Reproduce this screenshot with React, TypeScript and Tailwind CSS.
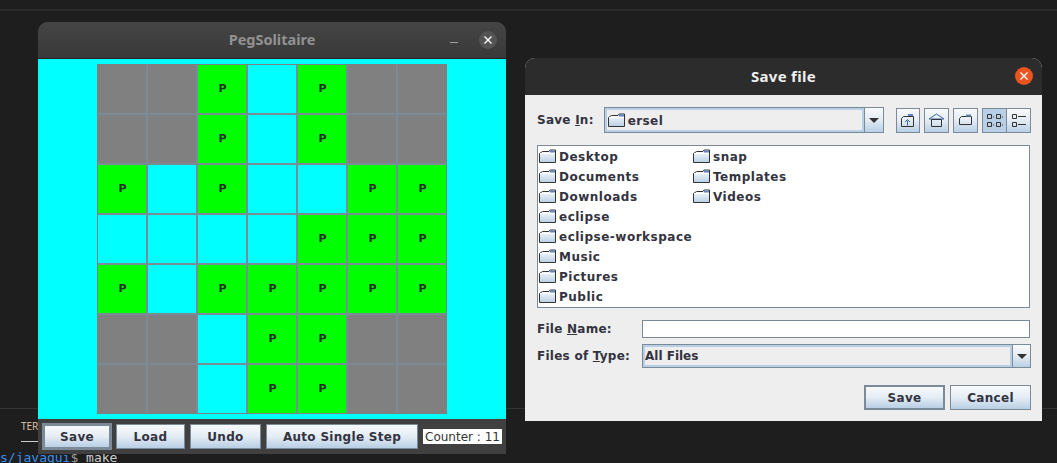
import React from 'react';

const metal = '[font-family:"DejaVu_Sans",sans-serif] font-bold text-[12px] text-[#333340]';
const btnFace = 'bg-gradient-to-b from-[#f8fafc] via-[#e4ecf4] to-[#b8cfe5]';

const board = [
  'xxP.Pxx',
  'xxP.Pxx',
  'P.P..PP',
  '....PPP',
  'P.PPPPP',
  'xx.PPxx',
  'xx.PPxx',
];

function Cell({ kind }: { kind: string }) {
  if (kind === 'x') return <div className="bg-[#808080]" />;
  if (kind === '.') return <div className="bg-[#00ffff]" />;
  return (
    <div className="flex items-center justify-center pl-px pt-px bg-[#00ff00] [font-family:'DejaVu_Sans',sans-serif] font-bold text-[11px] text-[#1f2f1f]">
      P
    </div>
  );
}

function Folder() {
  return (
    <svg width="17" height="14" viewBox="0 0 17 14" className="shrink-0 -mt-[2px]">
      <defs>
        <linearGradient id="fold" x1="0" y1="0" x2="0" y2="1">
          <stop offset="0" stopColor="#ffffff" />
          <stop offset="1" stopColor="#b8cfe5" />
        </linearGradient>
      </defs>
      <path d="M.5 4.5 L3.5 2.5 H10 L11 1 H16.5 V13.5 H.5 Z" fill="url(#fold)" stroke="#333" strokeWidth="1" />
      <path d="M11 1.5h5v2h-5z" fill="#6382bf" />
      <path d="M1 4.5H16" stroke="#fff" />
    </svg>
  );
}

function MetalBtn({ children, className = '' }: { children: React.ReactNode; className?: string }) {
  return (
    <div className={`flex items-center justify-center border border-[#7a8a99] ${btnFace} ${metal} tracking-[0.3px] ${className}`}>
      {children}
    </div>
  );
}

function ComboArrow({ className = '' }: { className?: string }) {
  return (
    <div className={`flex items-center justify-center border-l border-[#7a8a99] ${btnFace} ${className}`}>
      <svg width="10" height="5" viewBox="0 0 10 5">
        <path d="M0 0h10L5 5z" fill="#333" />
      </svg>
    </div>
  );
}

function ToolBtn({ children, active = false, className = '' }: { children: React.ReactNode; active?: boolean; className?: string }) {
  return (
    <div className={`flex items-center justify-center w-[25px] h-[25px] border border-[#7a8a99] ${active ? 'bg-[#b8cfe5]' : btnFace} ${className}`}>
      <svg width="19" height="17" viewBox="0 0 19 17" fill="none" stroke="#333">
        {children}
      </svg>
    </div>
  );
}

const FolderRow = ({ name }: { name: string }) => (
  <div className={`flex items-center gap-[3px] h-[20px] whitespace-nowrap ${metal} tracking-[0.5px]`}>
    <Folder />
    <span>{name}</span>
  </div>
);

export default function App() {
  return (
    <div className="relative flex flex-col w-[1057px] h-[463px] overflow-hidden bg-[#1e1e1e]">
      <div className="h-[11px] border-b-2 border-[#2a2a2a]" />

      <div className="mt-auto h-[55px] border-t border-[#333333] pl-[21px] pt-[10px]">
        <div className="w-[40px] h-[23px] border-b border-[#cccccc] text-[10px] text-[#e0c9a8] [font-family:'Open_Sans',sans-serif]">TER</div>
        <div className="-ml-[21px] mt-[8px] [font-family:'DejaVu_Sans_Mono',monospace] text-[13px] leading-[16px] text-[#cccccc]">
          <span className="text-[#3b8eea]">s/javagui</span><span className="text-[#999999]">$</span> make
        </div>
      </div>

      {/* PegSolitaire window */}
      <div className="absolute left-[38px] top-[22px] flex flex-col w-[468px] h-[432px] rounded-t-[10px] overflow-hidden bg-[#404040]">
        <div className="relative flex items-center justify-center h-[37px] shrink-0 bg-gradient-to-b from-[#454545] to-[#393939] border-b border-[#222222]">
          <span className="[font-family:'Noto_Sans',sans-serif] font-bold text-[14.5px] text-[#929292]">PegSolitaire</span>
          <div className="absolute left-[412px] top-[20px] w-[8px] h-[1px] bg-[#a0a0a0]" />
          <div className="absolute right-[9px] top-[9px] flex items-center justify-center w-[18px] h-[18px] rounded-full bg-[#545454]">
            <svg width="10" height="10" viewBox="0 0 10 10"><path d="M1.5 1.5l7 7M8.5 1.5l-7 7" stroke="#fff" strokeWidth="1.4" /></svg>
          </div>
        </div>
        <div className="flex justify-center h-[360px] pt-[5px] bg-[#00ffff]">
          <div className="grid grid-cols-[repeat(7,48px)] grid-rows-[repeat(7,48px)] gap-[2px] w-[350px] h-[350px] border border-[#808080] bg-[#7a8a99]">
            {board.join('').split('').map((c, i) => (
              <Cell key={i} kind={c} />
            ))}
          </div>
        </div>
        <div className="flex items-center gap-[5px] pl-[5px] h-[35px]">
          <MetalBtn className="w-[68px] h-[25px] !border-2 outline outline-1 outline-[#7a8a99]">Save</MetalBtn>
          <MetalBtn className="w-[69px] h-[25px]">Load</MetalBtn>
          <MetalBtn className="w-[71px] h-[25px]">Undo</MetalBtn>
          <MetalBtn className="w-[152px] h-[25px]">Auto Single Step</MetalBtn>
          <div className="flex items-center justify-center w-[79px] h-[15px] whitespace-nowrap bg-white [font-family:'DejaVu_Sans',sans-serif] text-[12px] text-[#333333]">Counter : 11</div>
        </div>
      </div>

      {/* Save file dialog */}
      <div className="absolute left-[525px] top-[58px] flex flex-col w-[517px] h-[363px] rounded-t-[10px] overflow-hidden bg-[#eeeeee]">
        <div className="relative flex items-center justify-center h-[37px] shrink-0 bg-[#2c2c2c]">
          <span className="[font-family:'Noto_Sans',sans-serif] font-bold text-[15px] tracking-[0.3px] text-[#eeeeee]">Save file</span>
          <div className="absolute right-[9px] top-[9px] flex items-center justify-center w-[18px] h-[18px] rounded-full bg-[#e95420]">
            <svg width="10" height="10" viewBox="0 0 10 10"><path d="M1.5 1.5l7 7M8.5 1.5l-7 7" stroke="#fff" strokeWidth="1.4" /></svg>
          </div>
        </div>

        <div className="flex flex-col pl-[12px] pr-[11px] pt-[12px]">
          <div className="flex items-center h-[26px]">
            <span className={`w-[67px] ${metal} tracking-[0.25px]`}>Save <u>I</u>n:</span>
            <div className="flex w-[281px] h-[26px] border border-[#7a8a99] bg-[#eeeeee]">
              <div className={`flex flex-1 items-center gap-[3px] pl-px pt-px border-2 border-[#b8cfe5] ${metal} tracking-[0.4px]`}>
                <Folder />
                <span>ersel</span>
              </div>
              <ComboArrow className="w-[19px]" />
            </div>
            <ToolBtn className="ml-[12px]">
              <path d="M3.5 6.5l2-2h10v10h-12z" />
              <path d="M10 2h5v2h-5z" fill="#6382bf" stroke="none" />
              <path d="M9.5 13.5v-5M7 10l2.5-2.5L12 10" stroke="#3568a8" />
            </ToolBtn>
            <ToolBtn className="ml-[4px]">
              <path d="M2 7l7.5-5L17 7z" stroke="#3568a8" />
              <path d="M4.5 7.5h10v7h-10z" />
            </ToolBtn>
            <ToolBtn className="ml-[4px]">
              <path d="M3.5 6.5l2-2h10v8h-12z" />
              <path d="M10 2.5h5v2h-5z" fill="#6382bf" stroke="none" />
            </ToolBtn>
            <ToolBtn className="ml-[4px]" active>
              <path d="M2.5 2.5h4v4h-4zM11.5 2.5h4v4h-4zM2.5 10.5h4v4h-4zM11.5 10.5h4v4h-4z" />
              <path d="M8 5h1M17 5h1M8 13h1M17 13h1" />
            </ToolBtn>
            <ToolBtn className="-ml-px">
              <path d="M3.5 2.5h4v4h-4zM3.5 10.5h4v4h-4z" />
              <path d="M9 4.5h8M9 12.5h8" />
            </ToolBtn>
          </div>

          <div className="flex mt-[12px] mr-px pl-[1px] pt-[1px] h-[163px] border border-[#7a8a99] bg-white">
            <div className="flex flex-col w-[154px]">
              {['Desktop', 'Documents', 'Downloads', 'eclipse', 'eclipse-workspace', 'Music', 'Pictures', 'Public'].map((n) => (
                <FolderRow key={n} name={n} />
              ))}
            </div>
            <div className="flex flex-col">
              {['snap', 'Templates', 'Videos'].map((n) => (
                <FolderRow key={n} name={n} />
              ))}
            </div>
          </div>

          <div className="flex items-center mt-[12px] h-[18px]">
            <span className={`w-[105px] ${metal} tracking-[0.25px]`}>File <u>N</u>ame:</span>
            <div className="w-[388px] h-[18px] border border-[#7a8a99] bg-white" />
          </div>

          <div className="flex items-center mt-[6px] h-[24px]">
            <span className={`w-[105px] ${metal} tracking-[0.25px]`}>Files of <u>T</u>ype:</span>
            <div className="flex w-[389px] h-[24px] border border-[#7a8a99] bg-[#eeeeee]">
              <div className={`flex flex-1 items-center border-2 border-[#b8cfe5] ${metal}`}>All Files</div>
              <ComboArrow className="w-[18px]" />
            </div>
          </div>

          <div className="flex justify-end gap-[5px] mt-[17px]">
            <MetalBtn className="w-[81px] h-[25px] !border-2">Save</MetalBtn>
            <MetalBtn className="w-[81px] h-[25px]">Cancel</MetalBtn>
          </div>
        </div>
      </div>
    </div>
  );
}
